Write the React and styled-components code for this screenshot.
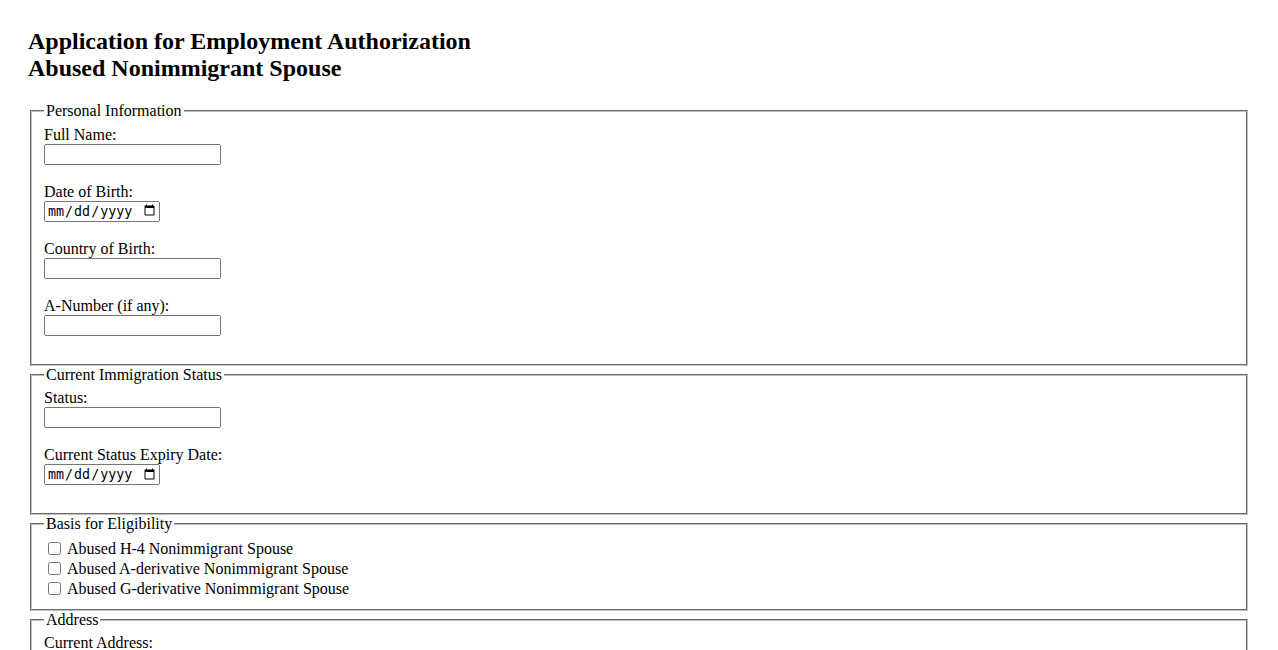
import React from "react";
import styled, { createGlobalStyle } from "styled-components";

const Global = createGlobalStyle`
  html, body { margin: 0; padding: 0; background: #fff; }
  body { font-family: "Liberation Serif", "Times New Roman", serif; font-size: 16px; color: #000; }
`;

const Page = styled.div`
  padding: 28px 28px 40px;
`;

const Title = styled.h2`
  margin: 0 0 19.92px;
  font-size: 24px;
  font-weight: bold;
  line-height: normal;
`;

const Section = styled.fieldset`
  margin: 0 2px;
  padding: 0.35em 0.75em 0.625em;
  border: 2px groove rgb(192, 192, 192);
  min-inline-size: min-content;
`;

const Legend = styled.legend`
  padding: 0 2px;
`;

const Field = styled.div`
  margin-bottom: 18px;
`;

const Label = styled.label`
  display: block;
  line-height: normal;
`;

const TextInput = styled.input`
  display: block;
  box-sizing: border-box;
  height: 21px;
  width: ${(p) => (p.type === "date" ? "116px" : "177px")};
`;

const CheckRow = styled.label`
  display: flex;
  align-items: center;
  height: 20px;
`;

const Check = styled.input`
  margin: 3px 6px 3px 4px;
`;

function TextField({ id, label, type = "text" }) {
  return (
    <Field>
      <Label htmlFor={id}>{label}</Label>
      <TextInput id={id} type={type} />
    </Field>
  );
}

export default function App() {
  return (
    <>
      <Global />
      <Page>
        <Title>
          Application for Employment Authorization
          <br />
          Abused Nonimmigrant Spouse
        </Title>
        <form>
          <Section>
            <Legend>Personal Information</Legend>
            <TextField id="name" label="Full Name:" />
            <TextField id="dob" label="Date of Birth:" type="date" />
            <TextField id="cob" label="Country of Birth:" />
            <TextField id="anum" label="A-Number (if any):" />
          </Section>
          <Section>
            <Legend>Current Immigration Status</Legend>
            <TextField id="status" label="Status:" />
            <TextField id="expiry" label="Current Status Expiry Date:" type="date" />
          </Section>
          <Section>
            <Legend>Basis for Eligibility</Legend>
            <CheckRow>
              <Check type="checkbox" />
              Abused H-4 Nonimmigrant Spouse
            </CheckRow>
            <CheckRow>
              <Check type="checkbox" />
              Abused A-derivative Nonimmigrant Spouse
            </CheckRow>
            <CheckRow>
              <Check type="checkbox" />
              Abused G-derivative Nonimmigrant Spouse
            </CheckRow>
          </Section>
          <Section>
            <Legend>Address</Legend>
            <TextField id="addr" label="Current Address:" />
            <TextField id="city" label="City:" />
            <TextField id="state" label="State:" />
            <TextField id="zip" label="ZIP Code:" />
          </Section>
        </form>
      </Page>
    </>
  );
}
